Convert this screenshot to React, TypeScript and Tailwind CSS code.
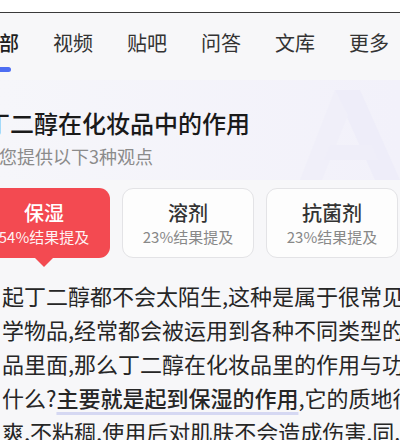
import React from 'react';

const tabs = ['全部', '视频', '贴吧', '问答', '文库', '更多'];

const views = [
  { name: '保湿', pct: '54%结果提及', active: true },
  { name: '溶剂', pct: '23%结果提及', active: false },
  { name: '抗菌剂', pct: '23%结果提及', active: false },
];

export default function App() {
  return (
    <div className="w-[400px] h-[440px] overflow-hidden bg-[#f7f7f9] text-[#222] font-['Noto_Sans_CJK_SC',sans-serif]">
      {/* top strip */}
      <div className="h-[13px] bg-white border-b border-[#3a3a3a]" />

      {/* tabs */}
      <nav className="flex gap-[34px] ml-[-21px] pt-[17px] h-[67px]">
        {tabs.map((t, i) => (
          <div key={t} className="flex flex-col items-center shrink-0">
            <span
              className={`text-[20px] leading-[26px] whitespace-nowrap ${
                i === 0 ? 'text-[#1f1f1f] font-medium' : 'text-[#333]'
              }`}
            >
              {t}
            </span>
            {i === 0 && <span className="mt-[11px] w-[24px] h-[5px] rounded-full bg-[#4e6ef2]" />}
          </div>
        ))}
      </nav>

      {/* header */}
      <header className="relative h-[100px] pt-[27px] bg-gradient-to-r from-[#f6f6fa] to-[#f2f1fa] overflow-hidden">
        <svg className="absolute right-0 top-[5px]" width="100" height="95" viewBox="0 0 100 95">
          <path d="M35 5 L60 5 L100 95 L75 95 Z" fill="#eeedf9" />
          <path d="M35 5 L0 95 L22 95 L48 30 Z" fill="#f0eff9" />
          <path d="M30 60 L72 60 L78 75 L24 75 Z" fill="#efeef9" />
        </svg>
        <h1 className="relative ml-[-14px] text-[24px] leading-[32px] font-medium text-[#1a1a1a] whitespace-nowrap">
          丁二醇在化妆品中的作用
        </h1>
        <p className="relative mt-[5px] ml-[-1px] text-[18px] leading-[24px] text-[#8b8b8b] whitespace-nowrap">
          您提供以下3种观点
        </p>
      </header>

      {/* view cards */}
      <div className="flex gap-[12px] ml-[-22px] mt-[8px]">
        {views.map((v) => (
          <div
            key={v.name}
            className={`relative shrink-0 w-[132px] h-[70px] rounded-[11px] flex flex-col items-center justify-center ${
              v.active ? 'bg-[#f34a51] text-white' : 'bg-[#fdfdfd] border border-[#e3e3e6]'
            }`}
          >
            <span className={`text-[20px] leading-[26px] font-medium ${v.active ? '' : 'text-[#333]'}`}>
              {v.name}
            </span>
            <span className={`text-[15px] leading-[20px] mt-[1px] ${v.active ? 'text-white/95' : 'text-[#888]'}`}>
              {v.pct}
            </span>
            {v.active && (
              <span className="absolute left-1/2 -translate-x-1/2 bottom-[-9px] w-0 h-0 border-l-[10px] border-r-[10px] border-t-[10px] border-l-transparent border-r-transparent border-t-[#f34a51]" />
            )}
          </div>
        ))}
      </div>

      {/* body text */}
      <div className="mt-[20px] pl-[2px] text-[22px] leading-[34px] text-[#262626] whitespace-nowrap">
        <p>起丁二醇都不会太陌生,这种是属于很常见的化</p>
        <p>学物品,经常都会被运用到各种不同类型的化妆</p>
        <p>品里面,那么丁二醇在化妆品里的作用与功效是</p>
        <p>
          什么?
          <span className="font-medium underline decoration-[#d5d8f2] decoration-[3px] underline-offset-[5px]">
            主要就是起到保湿的作用
          </span>
          ,它的质地很清
        </p>
        <p>爽,不粘稠,使用后对肌肤不会造成伤害,同...</p>
      </div>
    </div>
  );
}
